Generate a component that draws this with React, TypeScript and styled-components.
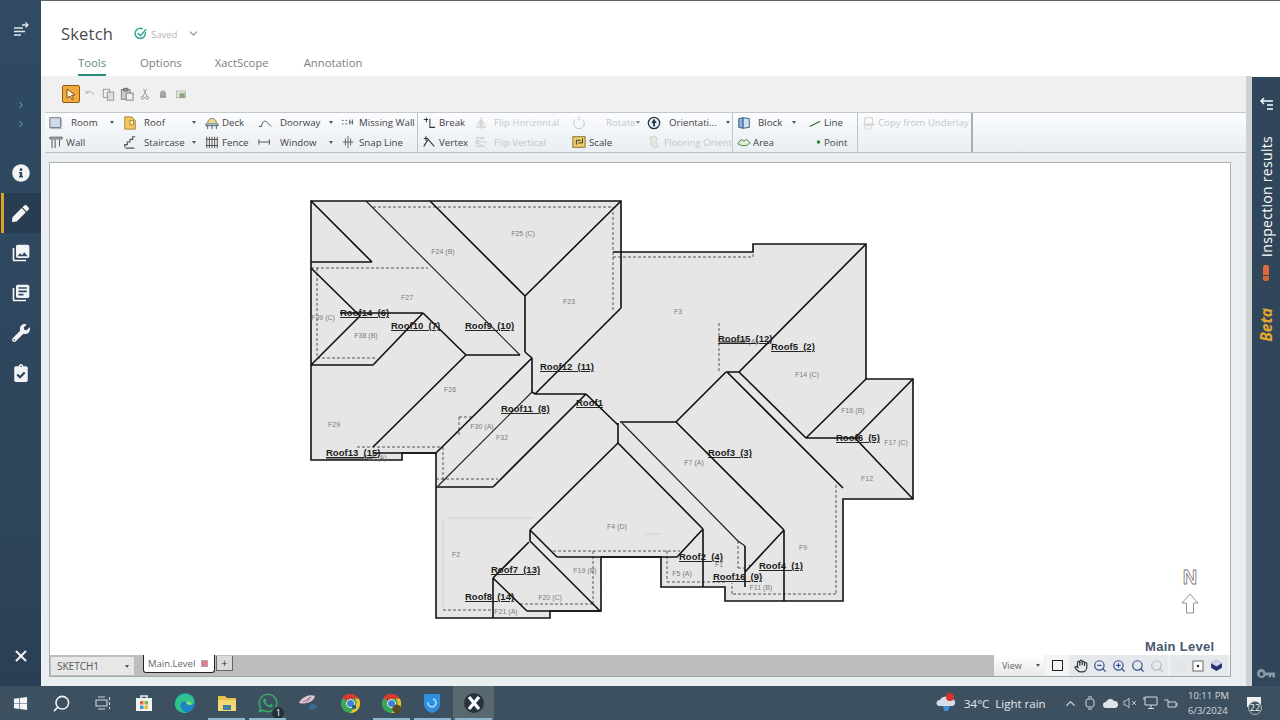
import React from 'react';
import styled, { createGlobalStyle } from 'styled-components';
import { ChevronDown, ChevronRight, ChevronUp, Hand, Search, X, ZoomIn, ZoomOut } from 'lucide-react';
import { FaInfoCircle, FaPen, FaWrench, FaClipboardCheck, FaWindows, FaWhatsapp } from 'react-icons/fa';
import { MdPhotoLibrary, MdLibraryBooks } from 'react-icons/md';

const UI_FONT = '"Open Sans", "Noto Sans", sans-serif';

const GlobalStyle = createGlobalStyle`
  html, body { margin: 0; padding: 0; background: #fff; }
  #root { width: 1280px; height: 720px; overflow: hidden; }
  * { box-sizing: border-box; }
`;

const Screen = styled.div`
  width: 1280px;
  height: 720px;
  display: flex;
  flex-direction: column;
  font-family: ${UI_FONT};
`;

const AppRow = styled.div`
  flex: 1;
  min-height: 0;
  display: flex;
`;

/* left nav */
const Sidebar = styled.nav`
  width: 41px;
  flex: none;
  display: flex;
  flex-direction: column;
  align-items: stretch;
  background: linear-gradient(#2f4a62, #2e465c 70%, #2a3f54);
  color: #fff;
`;

const SideTop = styled.div`
  height: 58px;
  display: flex;
  align-items: center;
  justify-content: center;
`;

const SideChevrons = styled.div`
  height: 95px;
  padding-top: 42px;
  display: flex;
  flex-direction: column;
  align-items: center;
  gap: 9px;
  color: #4f8ea6;
`;

const SideItem = styled.div<{ $active?: boolean }>`
  height: 40px;
  display: flex;
  align-items: center;
  justify-content: center;
  background: ${p => (p.$active ? '#283d51' : 'transparent')};
  position: relative;
  ${p => p.$active && `
    &::before {
      content: '';
      position: absolute;
      left: 1px;
      top: 0;
      bottom: 0;
      width: 3px;
      background: #d9a521;
    }
  `}
`;

const SideClose = styled.div`
  margin-top: auto;
  height: 60px;
  display: flex;
  align-items: center;
  justify-content: center;
`;

/* workspace */
const Workspace = styled.div`
  flex: 1;
  min-width: 0;
  display: flex;
  flex-direction: column;
`;

const Header = styled.header`
  height: 76px;
  flex: none;
  background: #fff;
  border-top: 1px solid #5a6670;
  padding-left: 20px;
`;

const TitleRow = styled.div`
  height: 47px;
  padding-top: 17px;
  display: flex;
  align-items: center;
`;

const Title = styled.div`
  font-size: 16.5px;
  color: #4a4a4a;
  width: 73px;
  letter-spacing: 0.2px;
`;

const SavedText = styled.span`
  font-size: 9.5px;
  color: #b4b4b4;
  margin: 3px 10px 0 4px;
`;

const Tabs = styled.div`
  display: flex;
  padding-left: 17px;
  height: 28px;
`;

const Tab = styled.div<{ $active?: boolean; $gap: number }>`
  font-size: 11.3px;
  margin-right: ${p => p.$gap}px;
  padding-top: 7px;
  height: 28px;
  color: ${p => (p.$active ? '#5e8a82' : '#7d7d7d')};
  border-bottom: 2px solid ${p => (p.$active ? '#2c8c7c' : 'transparent')};
`;

const Body = styled.div`
  flex: 1;
  min-height: 0;
  display: flex;
`;

const Center = styled.div`
  flex: 1;
  min-width: 0;
  display: flex;
  flex-direction: column;
  background: #f0f0f0;
  border-right: 6px solid #cfd2d3;
`;

const QuickBar = styled.div`
  height: 36px;
  flex: none;
  padding: 9px 0 0 21px;
  display: flex;
  align-items: flex-start;
`;

const PointerButton = styled.div`
  width: 18px;
  height: 18px;
  background: #f2a93b;
  border: 1px solid #8a5a18;
  border-radius: 2px;
  display: flex;
  align-items: center;
  justify-content: center;
  margin-right: 4px;
`;

const QuickIcon = styled.div<{ $w: number }>`
  width: ${p => p.$w}px;
  height: 18px;
  display: flex;
  align-items: center;
  justify-content: flex-start;
`;

const Ribbon = styled.div`
  height: 41px;
  flex: none;
  margin-left: 4px;
  display: flex;
  background: linear-gradient(#fbfcfd, #e9eef2);
  border-top: 1px solid #c4c8cc;
  border-bottom: 1px solid #b8bdc2;
`;

const RibbonGroup = styled.div<{ $w: number; $heavy?: boolean }>`
  width: ${p => p.$w}px;
  flex: none;
  display: flex;
  border-right: ${p => (p.$heavy ? '2px solid #a9aeb3' : '1px solid #bfc4c9')};
`;

const RibbonColumn = styled.div<{ $w: number }>`
  width: ${p => p.$w}px;
  flex: none;
  padding-left: 4px;
  display: flex;
  flex-direction: column;
`;

const ToolItem = styled.div<{ $off?: boolean }>`
  height: 20px;
  display: flex;
  align-items: center;
  font-size: 9.7px;
  white-space: nowrap;
  color: ${p => (p.$off ? '#b5b8ba' : '#3f4347')};
  opacity: ${p => (p.$off ? 0.75 : 1)};

  &:first-child {
    height: 19px;
  }
`;

const ToolLabel = styled.span<{ $gap: number }>`
  margin-left: ${p => p.$gap}px;
`;

const Caret = styled.span<{ $inset: number }>`
  margin-left: auto;
  margin-right: ${p => p.$inset}px;
  width: 0;
  height: 0;
  border-left: 2.5px solid transparent;
  border-right: 2.5px solid transparent;
  border-top: 3px solid #555;
`;

const Frame = styled.div`
  flex: 1;
  min-height: 0;
  display: flex;
  flex-direction: column;
  padding: 9px 15px 9px 8px;
  background: #e9eef1;
`;

const Canvas = styled.div`
  flex: 1;
  min-height: 0;
  background: #fff;
  border: 1px solid #b0b3b6;
  border-bottom: 0;
  line-height: 0;
`;

const StatusBar = styled.div`
  height: 22px;
  flex: none;
  display: flex;
  align-items: stretch;
  background: #bdbdbd;
  border: 1px solid #a5a8aa;
  border-top: 0;
`;

const SketchCombo = styled.div`
  width: 83px;
  height: 18px;
  margin: 2px 9px 0 1px;
  background: #e7e7e7;
  color: #555;
  font-size: 10px;
  display: flex;
  align-items: center;
  padding-left: 6px;
`;

const LevelTab = styled.div`
  width: 72px;
  height: 18px;
  background: #fff;
  border: 1px solid #222;
  border-top: 0;
  border-radius: 0 0 3px 3px;
  color: #666;
  font-size: 9.5px;
  display: flex;
  align-items: center;
  padding-left: 4px;
  gap: 6px;
`;

const LevelMark = styled.span`
  width: 7px;
  height: 7px;
  background: #e07a8c;
  border: 1px solid #b9a5a8;
`;

const AddTab = styled.div`
  width: 17px;
  height: 15px;
  margin: 1px 0 0 1px;
  background: #d9d9d9;
  border: 1px solid #666;
  border-top: 0;
  color: #333;
  font-size: 11px;
  line-height: 13px;
  text-align: center;
`;

const ViewTools = styled.div`
  margin-left: auto;
  width: 236px;
  display: flex;
  background: #eef1f3;
`;

const ViewCombo = styled.div`
  width: 50px;
  display: flex;
  align-items: center;
  padding-left: 8px;
  color: #666;
  font-size: 9px;
  background: linear-gradient(#fff, #e8e8e8);
`;

const ViewSquare = styled.div`
  width: 22px;
  margin: 0 2px;
  display: flex;
  align-items: center;
  justify-content: center;
  background: #f5f5f5;
`;

const SquareMark = styled.span`
  width: 11px;
  height: 11px;
  border: 1.5px solid #222;
`;

const ViewSet = styled.div<{ $w: number }>`
  width: ${p => p.$w}px;
  display: flex;
  align-items: center;
  justify-content: space-around;
  padding: 0 2px;
  margin-right: 2px;
  background: #e6e9ec;
`;

/* right rail */
const Rail = styled.aside`
  width: 28px;
  flex: none;
  background: #2f465b;
  color: #fff;
  display: flex;
  flex-direction: column;
  align-items: center;
  padding-top: 20px;
  margin-top: 1px;
`;

const RailText = styled.div`
  writing-mode: vertical-rl;
  transform: rotate(180deg);
  font-size: 14px;
  margin-top: 25px;
  letter-spacing: 0.3px;
`;

const RailFlag = styled.div`
  width: 6px;
  height: 16px;
  margin-top: 8px;
  border-radius: 2px;
  background: linear-gradient(#e0683a 0 62%, transparent 62% 70%, #d9662f 70%);
`;

const RailBeta = styled.div`
  writing-mode: vertical-rl;
  transform: rotate(180deg);
  font-size: 15.5px;
  font-weight: 700;
  font-style: italic;
  margin-top: 27px;
  color: #e3a72f;
`;

const RailKey = styled.div`
  margin-top: auto;
  height: 24px;
  color: #8a99a6;
`;

/* taskbar */
const Taskbar = styled.footer`
  height: 34px;
  flex: none;
  display: flex;
  align-items: center;
  background: #3d505f;
  color: #e4e8ea;
`;

const TaskSlot = styled.div<{ $run?: boolean; $current?: boolean }>`
  width: 41.2px;
  height: 34px;
  flex: none;
  display: flex;
  align-items: center;
  justify-content: center;
  position: relative;
  background: ${p => (p.$current ? '#59686f' : 'transparent')};
  ${p => p.$run && `
    &::after {
      content: '';
      position: absolute;
      left: 2px;
      right: 2px;
      bottom: 0;
      height: 2px;
      background: #8fb6cf;
    }
  `}
`;

const TaskBadge = styled.span`
  position: absolute;
  right: 4px;
  bottom: 1px;
  width: 12px;
  height: 12px;
  border-radius: 50%;
  background: #23303a;
  color: #fff;
  font-size: 9px;
  line-height: 12px;
  text-align: center;
`;

const Tray = styled.div`
  margin-left: auto;
  display: flex;
  align-items: center;
  height: 34px;
`;

const Weather = styled.div`
  display: flex;
  align-items: center;
  font-size: 11.5px;
  width: 124px;
`;

const WeatherText = styled.span`
  margin-left: 8px;
  white-space: pre;
`;

const TrayIcon = styled.div`
  width: 20px;
  display: flex;
  align-items: center;
  justify-content: center;
`;

const Clock = styled.div`
  margin-left: 8px;
  width: 40px;
  font-size: 9.5px;
  line-height: 15px;
  text-align: left;
  white-space: nowrap;
  color: #d4dade;
`;

const Notify = styled.div`
  width: 52px;
  display: flex;
  justify-content: center;
  position: relative;
`;

const NotifyCount = styled.span`
  position: absolute;
  left: 20px;
  top: 5px;
  width: 14px;
  height: 14px;
  border-radius: 50%;
  border: 1px solid #aab4bb;
  background: #3d505f;
  font-size: 9px;
  line-height: 12px;
  text-align: center;
  color: #fff;
`;

/* drawing */
const PlanSvg = styled.svg`
  display: block;
  width: 100%;
  height: 100%;
`;

const RoofLabel = styled.text`
  font-family: "Liberation Sans", sans-serif;
  font-size: 9.5px;
  font-weight: 700;
  fill: #1c1c1c;
  white-space: pre;
  text-decoration: underline;
`;

const FaceLabel = styled.text`
  font-family: "Liberation Sans", sans-serif;
  font-size: 7px;
  fill: #7d7d7d;
  text-anchor: middle;
`;

const LevelName = styled.text`
  font-family: "Liberation Sans", sans-serif;
  font-size: 13px;
  font-weight: 700;
  letter-spacing: 0.3px;
  fill: #47576f;
`;

const NorthLetter = styled.text`
  font-family: "Liberation Sans", sans-serif;
  font-size: 20px;
  font-weight: 700;
  fill: #fff;
  stroke: #777;
  stroke-width: 0.8px;
  text-anchor: middle;
`;

type Seg = [number, number, number, number];
const toPath = (segs: Seg[]) => segs.map(s => `M${s[0]} ${s[1]}L${s[2]} ${s[3]}`).join('');

const OUTLINE =
  '311,201 621,201 621,252 753,252 753,244 866,244 866,379 913,379 913,499 843,499 843,601 725,601 725,587 661,587 661,557 601,557 601,611 550,611 550,618 436,618 436,453 402,453 402,460 311,460';

const HEAVY: Seg[] = [
  [311, 201, 372, 262], [311, 262, 372, 262], [430, 201, 525, 296], [621, 201, 525, 296],
  [525, 296, 525, 352], [525, 352, 532, 358], [532, 358, 532, 392], [532, 392, 535, 394],
  [621, 252, 621, 308], [613, 252, 621, 252],
  [621, 308, 535, 394], [535, 394, 586, 394], [586, 394, 618, 425], [311, 268, 360, 316],
  [360, 316, 311, 365], [340, 313, 423, 313], [423, 313, 466, 355], [423, 313, 373, 365],
  [311, 365, 373, 365], [466, 355, 520, 355], [466, 355, 373, 447], [373, 453, 436, 453],
  [532, 358, 436, 453], [586, 394, 493, 487], [436, 487, 493, 487], [618, 423, 618, 443],
  [618, 443, 530, 530], [618, 443, 703, 529], [703, 529, 677, 557], [530, 530, 530, 541],
  [530, 530, 557, 557], [557, 557, 677, 557], [703, 529, 703, 587], [530, 541, 600, 611],
  [529, 542, 493, 578], [493, 578, 493, 618], [493, 578, 527, 611], [527, 611, 601, 611],
  [620, 422, 676, 422], [745, 546, 745, 587], [676, 422, 784, 530], [784, 530, 784, 601],
  [784, 530, 745, 572], [676, 422, 726, 372], [726, 372, 739, 372], [739, 372, 866, 244],
  [739, 372, 806, 438], [727, 372, 843, 488], [806, 438, 866, 379], [806, 438, 860, 438],
  [913, 379, 855, 438], [855, 438, 913, 499],
];

const THIN: Seg[] = [
  [366, 201, 520, 355], [532, 392, 438, 486], [622, 423, 738, 541], [738, 541, 745, 546],
  [326, 459, 372, 459], [719, 342, 745, 342],
];

const DASHED: Seg[] = [
  [373, 207, 613, 207], [613, 207, 613, 312], [311, 268, 428, 268], [317, 268, 317, 358],
  [317, 358, 377, 358], [357, 447, 443, 447], [443, 447, 443, 480], [459, 417, 459, 437],
  [459, 417, 473, 417], [613, 257, 753, 257], [753, 244, 753, 257], [719, 323, 719, 372],
  [836, 485, 836, 594], [836, 594, 732, 594], [732, 594, 732, 583], [553, 551, 680, 551],
  [593, 551, 593, 604], [520, 604, 593, 604], [667, 551, 667, 582], [667, 582, 725, 582],
  [738, 541, 738, 568], [738, 568, 745, 568], [443, 610, 493, 610], [436, 479, 498, 479],
];

const FAINT: Seg[] = [[448, 518, 533, 518], [443, 518, 443, 610], [645, 534, 660, 534]];

const ROOF_LABELS: [string, number, number][] = [
  ['Roof14  (6)', 340, 316], ['Roof10  (7)', 391, 329], ['Roof9  (10)', 465, 329],
  ['Roof12  (11)', 540, 370], ['Roof11  (8)', 501, 412], ['Roof1', 576, 406],
  ['Roof13  (15)', 326, 456], ['Roof15  (12)', 718, 342], ['Roof5  (2)', 771, 350],
  ['Roof3  (3)', 708, 456], ['Roof6  (5)', 836, 441], ['Roof2  (4)', 679, 560],
  ['Roof4  (1)', 759, 569], ['Roof16  (9)', 713, 580], ['Roof7  (13)', 491, 573],
  ['Roof8  (14)', 465, 600],
];

const FACE_LABELS: [string, number, number][] = [
  ['F25 (C)', 523, 236], ['F24 (B)', 443, 254], ['F27', 407, 300], ['F23', 569, 304],
  ['F3', 678, 314], ['F39 (C)', 323, 320], ['F38 (B)', 366, 338], ['F26', 450, 392],
  ['F29', 334, 427], ['F30 (A)', 482, 429], ['F32', 502, 440], ['F36 (A)', 375, 460],
  ['F14 (C)', 807, 377], ['F16 (B)', 853, 413], ['F17 (C)', 896, 445], ['F12', 867, 481],
  ['F7 (A)', 694, 465], ['F4 (D)', 617, 529], ['F9', 803, 550], ['F2', 456, 557],
  ['F19 (B)', 585, 573], ['F1', 719, 567], ['F5 (A)', 682, 576], ['F11 (B)', 761, 590],
  ['F20 (C)', 550, 600], ['F21 (A)', 506, 614], ['F15 (A)', 746, 344],
];

const RoofPlan: React.FC = () => (
  <PlanSvg viewBox="50 163 1180 492">
    <polygon points={OUTLINE} fill="#e6e6e6" stroke="#111" strokeWidth={1.6} />
    <path d={toPath(THIN)} stroke="#222" strokeWidth={1.2} fill="none" />
    <path d={toPath(FAINT)} stroke="#d2d2d2" strokeWidth={1} fill="none" />
    <path d={toPath(DASHED)} stroke="#333" strokeWidth={0.8} strokeDasharray="3 2" fill="none" />
    <path d={toPath(HEAVY)} stroke="#111" strokeWidth={1.6} fill="none" />
    <path d="M749 567h2v-2h-2z" fill="#222" />
    {FACE_LABELS.map(([t, x, y]) => (
      <FaceLabel key={t} x={x} y={y}>{t}</FaceLabel>
    ))}
    {ROOF_LABELS.map(([t, x, y]) => (
      <RoofLabel key={t} x={x} y={y}>{t}</RoofLabel>
    ))}
    <NorthLetter x={1190} y={584}>N</NorthLetter>
    <path d="M1190 594l8 9h-4.500v10h-7v-10h-4.500z" fill="#fff" stroke="#777" strokeWidth={0.8} />
    <LevelName x={1145} y={651}>Main Level</LevelName>
  </PlanSvg>
);

/* ribbon glyphs, roughly what the desktop app shows */
const Glyph: React.FC<{ children: React.ReactNode; size?: number }> = ({ children, size = 14 }) => (
  <svg width={size} height={size} viewBox="0 0 16 16" fill="none" stroke="#555" strokeWidth={1} style={{ flex: 'none' }}>
    {children}
  </svg>
);

const GLYPHS: Record<string, React.ReactNode> = {
  room: <><rect x="1" y="2" width="12" height="11" fill="#cfdcec" stroke="#667" /><path d="M14.500 3v10M1 14.500h14" stroke="#aab" /></>,
  wall: <path d="M1 2.500h14v2H1zM3.500 5v10M7 5v10M12 5v8" stroke="#444" />,
  roofDoc: <><path d="M2 1h8l4 4v10H2z" fill="#f3c75c" stroke="#9a7a2a" /><path d="M8 5h4v5H8z" fill="#fff4c8" stroke="#9a7a2a" /></>,
  stairs: <path d="M2 14v-3h3V8h3V5h3V2h3M3 15h10" stroke="#555" strokeWidth={1.4} />,
  deck: <><path d="M3 8c0-7 10-7 10 0" fill="#f2d98a" stroke="#777" /><path d="M1 9h14v2H1zM3 11v4M8 11v4M13 11v4" stroke="#355" /></>,
  fence: <path d="M2 2v13M5 2v13M8 2v13M11 2v13M14 2v13M1 5h14M1 12h14" stroke="#444" />,
  doorway: <path d="M1 12h3M4 12C5 5 9 4 12 9M12 9l3 3" stroke="#444" />,
  window: <path d="M1 5v6M1 8h12M13 5v6" stroke="#444" />,
  missing: <path d="M1 5h2M5 5h2M1 9h2M5 9h2M10 4v6M13 4v6M9 7h5" stroke="#555" />,
  snap: <path d="M8 1v14M5 4v8M11 4v8M2 8h12" stroke="#555" />,
  brk: <path d="M2 4h5M5 2v5M9 3v10h6" stroke="#333" strokeWidth={1.2} />,
  vertex: <path d="M2 13L7 5l7 8M2 4h5M4.500 1.500v5" stroke="#333" strokeWidth={1.2} />,
  flipH: <path d="M8 1v14M3 13l4-8v8zM13 13l-4-8v8z" stroke="#bbb" />,
  flipV: <path d="M1 8h14M3 3h9l-9 4zM3 13h9l-9-4z" stroke="#bbb" />,
  rotate: <><path d="M4 4a6 6 0 1 0 8 0" stroke="#aaa" /><path d="M8 1v4" stroke="#aaa" /></>,
  scale: <><rect x="1" y="2" width="14" height="12" fill="#f0cf6a" stroke="#7a6020" /><path d="M5 11V6h5M7 9h5v-5" stroke="#222" /></>,
  orient: <><circle cx="8" cy="8" r="6.500" fill="#e6edf2" stroke="#234" strokeWidth={1.4} /><path d="M8 3l3 5H9v4H7V8H5z" fill="#234" stroke="none" /></>,
  flooring: <path d="M3 3l5-2 4 3-2 4 3 5-4 2-5-4 1-4z" fill="#e4e6dd" stroke="#bbb" />,
  block: <><path d="M2 3l5-1v12l-5-1z" fill="#8fb5dc" stroke="#2a4f7a" /><path d="M7 2l7 1v10l-7 1z" fill="#cfe0f0" stroke="#2a4f7a" /></>,
  area: <path d="M1 10l4-5 3 2 3-2 4 4-4 3H5z" fill="#dff0d6" stroke="#3c7a3c" />,
  line: <path d="M2 12L14 6" stroke="#2b6b2b" strokeWidth={1.2} />,
  point: <circle cx="12" cy="8" r="2" fill="#2d7a3a" stroke="none" />,
  copy: <><path d="M3 2h9v7H3zM1 10h14" stroke="#bbb" /><path d="M3 11h8v4H3z" stroke="#bbb" strokeDasharray="2 1" /></>,
  undo: <path d="M3 7c3-4 8-3 10 2M3 3v4h4" stroke="#bdbdbd" strokeWidth={1.4} />,
  pages: <><rect x="1.500" y="1.500" width="8" height="10" fill="#eee" stroke="#888" /><rect x="6.500" y="5" width="8" height="10" fill="#ddd" stroke="#888" /></>,
  paste: <><rect x="1.500" y="3" width="10" height="11" fill="#ccc" stroke="#777" /><rect x="7" y="7" width="8" height="8" fill="#eee" stroke="#777" /><path d="M4 1.500h5v3H4z" fill="#999" stroke="#666" /></>,
  cut: <><circle cx="5" cy="13" r="2" stroke="#888" /><circle cx="11" cy="13" r="2" stroke="#888" /><path d="M5.500 11L10 1M10.500 11L6 1" stroke="#888" /></>,
  stamp: <path d="M4 13V7a4 4 0 0 1 8 0v6zM3 13h10" fill="#a8a8a8" stroke="#888" />,
  layer: <><rect x="2" y="4" width="12" height="9" fill="#e0e6d8" stroke="#aaa" /><rect x="6" y="7" width="7" height="6" fill="#88a878" stroke="none" /></>,
};

type Tool = { label: string; icon: string; gap: number; caret?: number; off?: boolean };
type Col = { w: number; items: Tool[] };
type Group = { w: number; heavy?: boolean; cols: Col[] };

const RIBBON: Group[] = [
  {
    w: 373,
    cols: [
      { w: 74, items: [{ label: 'Room', icon: 'room', gap: 8, caret: 5 }, { label: 'Wall', icon: 'wall', gap: 3 }] },
      { w: 82, items: [{ label: 'Roof', icon: 'roofDoc', gap: 7, caret: 5 }, { label: 'Staircase', icon: 'stairs', gap: 7, caret: 5 }] },
      { w: 53, items: [{ label: 'Deck', icon: 'deck', gap: 3 }, { label: 'Fence', icon: 'fence', gap: 3 }] },
      { w: 83, items: [{ label: 'Doorway', icon: 'doorway', gap: 8, caret: 4 }, { label: 'Window', icon: 'window', gap: 8, caret: 4 }] },
      { w: 80, items: [{ label: 'Missing Wall', icon: 'missing', gap: 4 }, { label: 'Snap Line', icon: 'snap', gap: 4 }] },
    ],
  },
  {
    w: 315,
    cols: [
      { w: 52, items: [{ label: 'Break', icon: 'brk', gap: 3 }, { label: 'Vertex', icon: 'vertex', gap: 3 }] },
      { w: 98, items: [{ label: 'Flip Horizontal', icon: 'flipH', gap: 6, off: true }, { label: 'Flip Vertical', icon: 'flipV', gap: 6, off: true }] },
      { w: 75, items: [{ label: 'Rotate', icon: 'rotate', gap: 20, caret: 7, off: true }, { label: 'Scale', icon: 'scale', gap: 3 }] },
      { w: 89, items: [{ label: 'Orientati...', icon: 'orient', gap: 8, caret: 2 }, { label: 'Flooring Orient', icon: 'flooring', gap: 3, off: true }] },
    ],
  },
  {
    w: 125,
    cols: [
      { w: 71, items: [{ label: 'Block', icon: 'block', gap: 7, caret: 8 }, { label: 'Area', icon: 'area', gap: 2 }] },
      { w: 53, items: [{ label: 'Line', icon: 'line', gap: 2 }, { label: 'Point', icon: 'point', gap: 2 }] },
    ],
  },
  {
    w: 115,
    heavy: true,
    cols: [{ w: 113, items: [{ label: 'Copy from Underlay', icon: 'copy', gap: 2, off: true }] }],
  },
];

/* taskbar colour icons */
const StoreIcon = () => (
  <svg width="20" height="20" viewBox="0 0 20 20">
    <path d="M2 5h16v13H2z" fill="#f1f3f2" />
    <path d="M7 5V3h6v2" fill="none" stroke="#f1f3f2" strokeWidth="1.500" />
    <rect x="6" y="8" width="3.500" height="3.500" fill="#e8663c" />
    <rect x="10.500" y="8" width="3.500" height="3.500" fill="#7db83c" />
    <rect x="6" y="12.500" width="3.500" height="3.500" fill="#3a9ad9" />
    <rect x="10.500" y="12.500" width="3.500" height="3.500" fill="#f2b632" />
  </svg>
);

const EdgeIcon = () => (
  <svg width="22" height="22" viewBox="0 0 22 22">
    <circle cx="11" cy="11" r="10" fill="#1a86c8" />
    <path d="M1 11C2 3 12 -1 18 4c3 3 3 7 1 8-3 2-7 0-7-2-3-2-7 1-5 6 1 3 4 5 8 4-7 3-15-2-14-9z" fill="#2fc28a" />
    <path d="M12 10c2-1 5 0 6 2-2 2-5 1-6-2z" fill="#8fe06a" />
  </svg>
);

const FolderIcon = () => (
  <svg width="20" height="18" viewBox="0 0 20 18">
    <path d="M1 2h7l2 2h9v13H1z" fill="#e8c04e" />
    <path d="M1 6h18v11H1z" fill="#f4d872" />
    <rect x="6" y="11" width="8" height="5" fill="#3f7fa6" />
  </svg>
);

const ChromeIcon: React.FC<{ tint?: boolean }> = ({ tint }) => (
  <svg width="21" height="21" viewBox="0 0 24 24">
    <circle cx="12" cy="12" r="11" fill="#3aa757" />
    <path d="M12 1a11 11 0 0 1 9.500 5.500H12a5.500 5.500 0 0 0-5 3L3 4.500A11 11 0 0 1 12 1z" fill="#d93a30" />
    <path d="M21.500 6.500A11 11 0 0 1 12 23l4.500-7.500a5.500 5.500 0 0 0 .5-9z" fill="#f5c02f" />
    <circle cx="12" cy="12" r="5" fill="#fff" />
    <circle cx="12" cy="12" r="4" fill="#3f7fd6" />
    {tint ? <circle cx="18" cy="18" r="5" fill="#5a4a22" /> : <circle cx="16" cy="16" r="2.500" fill="#1f5f7f" />}
  </svg>
);

const LotusIcon = () => (
  <svg width="22" height="20" viewBox="0 0 22 20">
    <path d="M1 10C4 3 13 1 17 3c-1 5-8 9-16 7z" fill="#dcc7d2" />
    <path d="M5 9l8-5M8 10l5-6" stroke="#a07088" strokeWidth="1" />
    <path d="M11 13c3-3 7-2 8 0 0 3-5 5-8 3z" fill="#356c8f" />
  </svg>
);

const ShieldIcon = () => (
  <svg width="20" height="22" viewBox="0 0 20 22">
    <path d="M2 2h16v10c0 5-4 8-8 9-4-1-8-4-8-9z" fill="#2e8fe0" />
    <path d="M6 10a4 4 0 1 0 5-3" stroke="#bfe0fa" strokeWidth="1.500" fill="none" />
  </svg>
);

const XactIcon = () => (
  <svg width="22" height="22" viewBox="0 0 22 22">
    <circle cx="11" cy="11" r="10" fill="#28323a" />
    <path d="M6 5l10 12M16 5L6 17" stroke="#fff" strokeWidth="3.200" />
  </svg>
);

const App: React.FC = () => (
  <Screen>
    <GlobalStyle />
    <AppRow>
      <Sidebar>
        <SideTop>
          <svg width="16" height="14" viewBox="0 0 16 14" fill="none" stroke="#dfe6ea" strokeWidth="1.300">
            <path d="M1 6h9M1 9.500h11M1 13h7M9 3h6M12.500 0.500L15 3l-2.500 2.500" />
          </svg>
        </SideTop>
        <SideChevrons>
          <ChevronRight size={10} strokeWidth={2.6} />
          <ChevronRight size={10} strokeWidth={2.6} />
        </SideChevrons>
        <SideItem><FaInfoCircle size={18} color="#f2f4f5" /></SideItem>
        <SideItem $active><FaPen size={17} color="#f2f4f5" /></SideItem>
        <SideItem><MdPhotoLibrary size={20} color="#f2f4f5" /></SideItem>
        <SideItem><MdLibraryBooks size={20} color="#f2f4f5" /></SideItem>
        <SideItem><FaWrench size={18} color="#f2f4f5" /></SideItem>
        <SideItem><FaClipboardCheck size={18} color="#f2f4f5" /></SideItem>
        <SideClose><X size={18} strokeWidth={2.6} color="#f5f6f7" /></SideClose>
      </Sidebar>
      <Workspace>
        <Header>
          <TitleRow>
            <Title>Sketch</Title>
            <svg width="13" height="13" viewBox="0 0 14 14" fill="none" stroke="#2fa38d" strokeWidth="1.500">
              <path d="M12 5.500A5.500 5.500 0 1 1 9.500 2.200" />
              <path d="M4 6.500l3 3 6-7" />
            </svg>
            <SavedText>Saved</SavedText>
            <ChevronDown size={13} color="#8a8f92" />
          </TitleRow>
          <Tabs>
            <Tab $active $gap={34}>Tools</Tab>
            <Tab $gap={33}>Options</Tab>
            <Tab $gap={35}>XactScope</Tab>
            <Tab $gap={0}>Annotation</Tab>
          </Tabs>
        </Header>
        <Body>
          <Center>
            <QuickBar>
              <PointerButton>
                <svg width="12" height="12" viewBox="0 0 12 12">
                  <path d="M2 1l8 6-3.500.500L8.500 11 7 11.500 5 8l-3 2z" fill="#fff4d8" stroke="#5a3a10" strokeWidth="0.800" />
                </svg>
              </PointerButton>
              <QuickIcon $w={18}><Glyph size={12}>{GLYPHS.undo}</Glyph></QuickIcon>
              <QuickIcon $w={18}><Glyph size={13}>{GLYPHS.pages}</Glyph></QuickIcon>
              <QuickIcon $w={19}><Glyph size={14}>{GLYPHS.paste}</Glyph></QuickIcon>
              <QuickIcon $w={19}><Glyph size={12}>{GLYPHS.cut}</Glyph></QuickIcon>
              <QuickIcon $w={17}><Glyph size={10}>{GLYPHS.stamp}</Glyph></QuickIcon>
              <QuickIcon $w={14}><Glyph size={12}>{GLYPHS.layer}</Glyph></QuickIcon>
            </QuickBar>
            <Ribbon>
              {RIBBON.map(g => (
                <RibbonGroup key={g.cols[0].items[0].label} $w={g.w} $heavy={g.heavy}>
                  {g.cols.map(c => (
                    <RibbonColumn key={c.items[0].label} $w={c.w}>
                      {c.items.map(t => (
                        <ToolItem key={t.label} $off={t.off}>
                          <Glyph>{GLYPHS[t.icon]}</Glyph>
                          <ToolLabel $gap={t.gap}>{t.label}</ToolLabel>
                          {t.caret !== undefined && <Caret $inset={t.caret} />}
                        </ToolItem>
                      ))}
                    </RibbonColumn>
                  ))}
                </RibbonGroup>
              ))}
            </Ribbon>
            <Frame>
              <Canvas>
                <RoofPlan />
              </Canvas>
              <StatusBar>
                <SketchCombo>
                  SKETCH1
                  <Caret $inset={5} />
                </SketchCombo>
                <LevelTab>Main.Level<LevelMark /></LevelTab>
                <AddTab>+</AddTab>
                <ViewTools>
                  <ViewCombo>
                    View
                    <Caret $inset={4} />
                  </ViewCombo>
                  <ViewSquare><SquareMark /></ViewSquare>
                  <ViewSet $w={98}>
                    <Hand size={14} color="#333" />
                    <ZoomOut size={14} color="#2e4f8f" />
                    <ZoomIn size={14} color="#2e4f8f" />
                    <Search size={14} color="#2e4f8f" />
                    <Search size={14} color="#b4bbc2" />
                  </ViewSet>
                  <ViewSet $w={58}>
                    <svg width="12" height="12" viewBox="0 0 12 12"><rect x="1" y="1" width="10" height="10" fill="#e2e4e6" /></svg>
                    <svg width="12" height="12" viewBox="0 0 12 12"><rect x="1" y="1" width="10" height="10" fill="#fff" stroke="#666" /><circle cx="6" cy="6" r="1.200" fill="#222" /></svg>
                    <svg width="13" height="13" viewBox="0 0 12 12"><path d="M6 1l5 3v4l-5 3-5-3V4z" fill="#24306e" /><path d="M1 4l5 3 5-3-5-3z" fill="#cfd6ea" /></svg>
                  </ViewSet>
                </ViewTools>
              </StatusBar>
            </Frame>
          </Center>
          <Rail>
            <svg width="15" height="14" viewBox="0 0 15 14" fill="none" stroke="#fff" strokeWidth="1.400">
              <path d="M14 4H2M5 1L2 4l3 3M14 8H8M14 12H8" />
            </svg>
            <RailText>Inspection results</RailText>
            <RailFlag />
            <RailBeta>Beta</RailBeta>
            <RailKey>
              <svg width="18" height="10" viewBox="0 0 18 10" fill="currentColor">
                <path d="M4.500 0a4.500 4.500 0 1 0 4 6.500H12v2h2v-2h1.500v2H18V3.500H8.500a4.500 4.500 0 0 0-4-3.500zm0 3a2 2 0 1 1 0 4 2 2 0 0 1 0-4z" />
              </svg>
            </RailKey>
          </Rail>
        </Body>
      </Workspace>
    </AppRow>
    <Taskbar>
      <TaskSlot><FaWindows size={15} color="#f4f6f7" /></TaskSlot>
      <TaskSlot><Search size={19} color="#f4f6f7" style={{ transform: 'scaleX(-1)' }} /></TaskSlot>
      <TaskSlot>
        <svg width="16" height="14" viewBox="0 0 16 14" fill="none" stroke="#cdd5da" strokeWidth="1.100">
          <path d="M3 1h7M3 13h7M1 4h11v6H1zM14.500 1v3M14.500 6v3M14.500 11v2" />
        </svg>
      </TaskSlot>
      <TaskSlot><StoreIcon /></TaskSlot>
      <TaskSlot><EdgeIcon /></TaskSlot>
      <TaskSlot $run><FolderIcon /></TaskSlot>
      <TaskSlot $run><FaWhatsapp size={22} color="#37a868" /><TaskBadge>1</TaskBadge></TaskSlot>
      <TaskSlot><LotusIcon /></TaskSlot>
      <TaskSlot><ChromeIcon /></TaskSlot>
      <TaskSlot $run><ChromeIcon tint /></TaskSlot>
      <TaskSlot $run><ShieldIcon /></TaskSlot>
      <TaskSlot $run $current><XactIcon /></TaskSlot>
      <Tray>
        <Weather>
          <svg width="20" height="20" viewBox="0 0 20 20">
            <path d="M3 13a3 3 0 0 1 1-6 5 5 0 0 1 9-1 4 4 0 0 1 4 7z" fill="#d7dde8" />
            <path d="M7 13h7l-2 5H8z" fill="#3f8fd8" />
            <circle cx="14" cy="4" r="4" fill="#d8302c" />
          </svg>
          <WeatherText>34°C  Light rain</WeatherText>
        </Weather>
        <TrayIcon><ChevronUp size={15} color="#d4dade" /></TrayIcon>
        <TrayIcon>
          <svg width="12" height="14" viewBox="0 0 12 14" fill="none" stroke="#d4dade"><rect x="2" y="3" width="8" height="8" rx="2" /><path d="M4 1h4M4 13h4" /></svg>
        </TrayIcon>
        <TrayIcon>
          <svg width="15" height="9" viewBox="0 0 15 9" fill="#dfe4e7"><path d="M3 9a3 3 0 0 1 0-6 4.500 4.500 0 0 1 8-1 3.500 3.500 0 0 1 1 7z" /></svg>
        </TrayIcon>
        <TrayIcon>
          <svg width="14" height="12" viewBox="0 0 14 12" fill="none" stroke="#b8c0c6"><path d="M1 4h2l3-3v10L3 8H1zM9 4l4 4M13 4L9 8" /></svg>
        </TrayIcon>
        <TrayIcon>
          <svg width="15" height="14" viewBox="0 0 15 14" fill="none" stroke="#d4dade"><path d="M2 1h12v8H2zM8 9v3M5 12.500h6M1 1v3" /></svg>
        </TrayIcon>
        <TrayIcon>
          <svg width="15" height="10" viewBox="0 0 15 10" fill="none" stroke="#d4dade"><path d="M1 2h4v2h8v5H5V4" /><path d="M14 5v3" /></svg>
        </TrayIcon>
        <Clock>10:11 PM<br />6/3/2024</Clock>
        <Notify>
          <svg width="14" height="14" viewBox="0 0 14 14" fill="#eef1f3"><path d="M0 1h14v10H5l-3 2v-2H0z" /></svg>
          <NotifyCount>22</NotifyCount>
        </Notify>
      </Tray>
    </Taskbar>
  </Screen>
);

export default App;
